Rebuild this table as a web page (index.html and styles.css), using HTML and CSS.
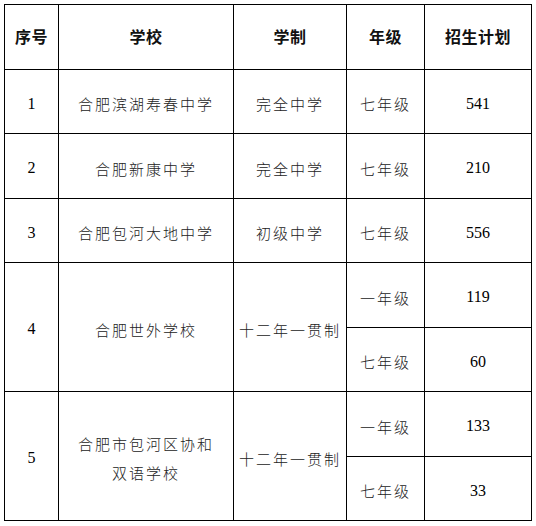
FILE: index.html
```html
<!DOCTYPE html>
<html lang="zh-CN">
<head>
<meta charset="utf-8">
<link rel="stylesheet" href="styles.css">
</head>
<body>
<table class="plan">
  <colgroup>
    <col class="c1"><col class="c2"><col class="c3"><col class="c4"><col class="c5">
  </colgroup>
  <thead>
    <tr class="r-a">
      <th>序号</th><th>学校</th><th>学制</th><th>年级</th><th>招生计划</th>
    </tr>
  </thead>
  <tbody>
    <tr class="r-b">
      <td class="num">1</td><td class="zh">合肥滨湖寿春中学</td><td class="zh">完全中学</td><td class="zh">七年级</td><td class="num">541</td>
    </tr>
    <tr class="r-a">
      <td class="num">2</td><td class="zh">合肥新康中学</td><td class="zh">完全中学</td><td class="zh">七年级</td><td class="num">210</td>
    </tr>
    <tr class="r-b">
      <td class="num">3</td><td class="zh">合肥包河大地中学</td><td class="zh">初级中学</td><td class="zh">七年级</td><td class="num">556</td>
    </tr>
    <tr class="r-a">
      <td class="num" rowspan="2">4</td><td class="zh" rowspan="2">合肥世外学校</td><td class="zh" rowspan="2">十二年一贯制</td><td class="zh">一年级</td><td class="num">119</td>
    </tr>
    <tr class="r-b">
      <td class="zh">七年级</td><td class="num">60</td>
    </tr>
    <tr class="r-a">
      <td class="num" rowspan="2">5</td><td class="zh two" rowspan="2">合肥市包河区协和<br>双语学校</td><td class="zh" rowspan="2">十二年一贯制</td><td class="zh">一年级</td><td class="num">133</td>
    </tr>
    <tr class="r-b">
      <td class="zh">七年级</td><td class="num">33</td>
    </tr>
  </tbody>
</table>
</body>
</html>
```

FILE: styles.css
```css
html, body {
  margin: 0;
  padding: 0;
  background: #ffffff;
}
body {
  padding: 4px 0 0 4px;
}
.plan {
  border-collapse: collapse;
  table-layout: fixed;
  width: 527px;
}
.c1 { width: 54px; }
.c2 { width: 175px; }
.c3 { width: 113px; }
.c4 { width: 78px; }
.c5 { width: 107px; }
.r-a { height: 65px; }
.r-b { height: 64px; }
.plan th, .plan td {
  border: 1px solid #000;
  padding: 0;
  text-align: center;
  vertical-align: middle;
}
.plan td {
  padding-top: 4px;
}
.plan th {
  padding-bottom: 3px;
  font-family: "Noto Sans CJK SC", "Noto Sans", sans-serif;
  font-size: 16px;
  font-weight: 700;
  color: #111;
  letter-spacing: 0.5px;
}
.num {
  font-family: "Liberation Serif", "Times New Roman", serif;
  font-size: 16px;
  color: #000;
}
.zh {
  font-family: "Noto Sans CJK SC", sans-serif;
  font-size: 15px;
  font-weight: 300;
  color: #222;
  letter-spacing: 2px;
  padding-left: 2px;
}
.two {
  line-height: 29px;
}
```
